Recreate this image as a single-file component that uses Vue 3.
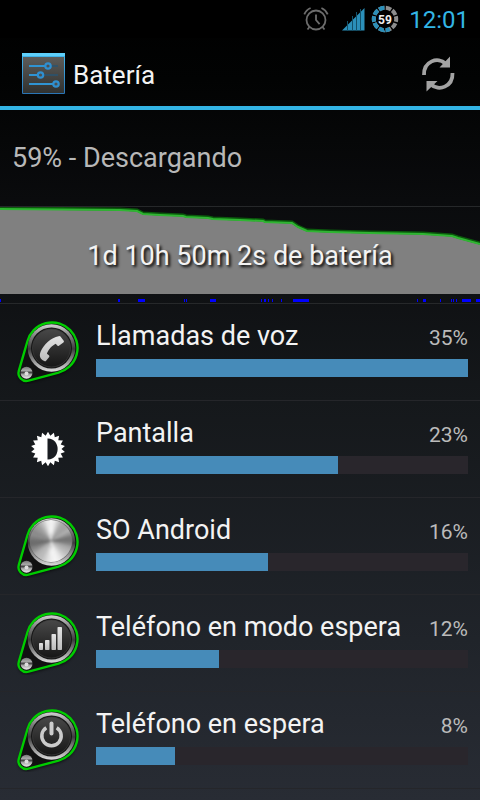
<script setup>
const apps = [
  { name: 'Llamadas de voz', share: 35, fill: 100, icon: 'phone' },
  { name: 'Pantalla', share: 23, fill: 65, icon: 'display' },
  { name: 'SO Android', share: 16, fill: 46.2, icon: 'metal' },
  { name: 'Teléfono en modo espera', share: 12, fill: 33, icon: 'signal' },
  { name: 'Teléfono en espera', share: 8, fill: 21.3, icon: 'power' },
]

// [start, width] of each awake period on the 480-unit time axis
const awake = [
  [0, 1], [118, 2], [138, 7], [184, 1], [186, 1], [210, 6], [261, 1], [264, 2],
  [268, 1], [272, 1], [281, 1], [293, 16], [417, 1], [423, 3], [440, 1],
  [451, 1], [453, 1], [456, 1], [462, 9], [476, 4],
]

const level = '0,1 120,2 137,3 143,6 160,7 183,8 186,9 208,10 213,11 240,12 263,13 265,14 292,15 298,19 307,23 330,24 370,25 423,26 452,28 458,30 480,36'

// teeth of the brightness symbol
const sun = Array.from({ length: 36 }, (_, i) => {
  const r = i % 2 ? 13.5 : 17.2
  const a = (i * Math.PI) / 18 - Math.PI / 2
  return `${(32 + r * Math.cos(a)).toFixed(1)},${(32 + r * Math.sin(a)).toFixed(1)}`
}).join(' ')

// brushed metal sheen: grey level for each 10 degree wedge, from the top
const sheen = [245, 235, 205, 175, 165, 165, 175, 150, 120, 115, 135, 165, 180, 190, 205, 225, 240, 245,
  240, 225, 205, 190, 185, 175, 150, 130, 110, 110, 125, 140, 140, 150, 160, 180, 205, 235]
const wedges = sheen.map((g, i) => {
  const p = (deg) => {
    const a = ((deg - 90) * Math.PI) / 180
    return `${(35 + 30 * Math.cos(a)).toFixed(1)} ${(27 + 30 * Math.sin(a)).toFixed(1)}`
  }
  return { d: `M35 27L${p(i * 10 - 6)}L${p(i * 10 + 6)}Z`, fill: `rgb(${g},${g},${g})` }
})
</script>

<template>
  <div class="screen">
    <svg class="defs" aria-hidden="true">
      <defs>
        <linearGradient id="ring" x1="0" y1="0" x2="0" y2="1">
          <stop offset="0" stop-color="#d2d2d2" />
          <stop offset=".25" stop-color="#808080" />
          <stop offset=".52" stop-color="#3c3c3c" />
          <stop offset=".75" stop-color="#8c8c8c" />
          <stop offset="1" stop-color="#dcdcdc" />
        </linearGradient>
        <linearGradient id="face" x1="0" y1="0" x2="0" y2="1">
          <stop offset="0" stop-color="#484848" />
          <stop offset="1" stop-color="#161616" />
        </linearGradient>
        <linearGradient id="glyph" x1="0" y1="0" x2="0" y2="1">
          <stop offset="0" stop-color="#e4e4e4" />
          <stop offset="1" stop-color="#bcbcbc" />
        </linearGradient>
        <linearGradient id="ball" x1="0" y1="0" x2="0" y2="1">
          <stop offset="0" stop-color="#777" />
          <stop offset=".3" stop-color="#aaa" />
          <stop offset=".48" stop-color="#444" />
          <stop offset=".65" stop-color="#aaa" />
          <stop offset="1" stop-color="#f0f0f0" />
        </linearGradient>
        <linearGradient id="tile" x1="0" y1="0" x2="0" y2="1">
          <stop offset="0" stop-color="#5c5c5a" />
          <stop offset="1" stop-color="#30312f" />
        </linearGradient>
        <linearGradient id="tileEdge" x1="0" y1="0" x2="0" y2="1">
          <stop offset="0" stop-color="#43b9ee" />
          <stop offset="1" stop-color="#2a74b4" />
        </linearGradient>
        <clipPath id="disc"><circle cx="35" cy="27" r="21" /></clipPath>
        <filter id="soft"><feGaussianBlur stdDeviation="0.8" /></filter>
        <filter id="shade" x="-20%" y="-20%" width="140%" height="140%"><feGaussianBlur stdDeviation="1.8" /></filter>
      </defs>
    </svg>

    <div class="status">
      <svg width="26" height="26" viewBox="0 0 26 26" fill="none" stroke="#6c6c6c" stroke-width="1.8">
        <circle cx="13" cy="14" r="9.5" />
        <path d="M13 8.500V14l3.600 4.200M1.300 8.300Q3 4 7.600 2M24.700 8.300Q23 4 18.400 2M6.500 21l-2 2.500M19.500 21l2 2.500" />
      </svg>
      <svg class="bars" width="24" height="24" viewBox="0 0 24 24">
        <path d="M1 23.500L23.500 1v22.500Z" fill="#2b8fb9" />
        <path d="M6.500 14v10M11.500 9v15M15.500 5v19M19.500 2v22" stroke="#125069" stroke-width="1" />
      </svg>
      <svg class="ring" width="28" height="28" viewBox="0 0 28 28">
        <g fill="none" stroke-width="4" transform="rotate(-86 14 14)">
          <circle cx="14" cy="14" r="11.200" stroke="#8d8d8d" pathLength="100" stroke-dasharray="8 2" />
          <circle cx="14" cy="14" r="11.200" stroke="#2b8fb9" pathLength="100" stroke-dasharray="0 42 6 2 8 2 8 2 8 2 8 2 8 2" />
        </g>
        <text x="14" y="18.500" text-anchor="middle">59</text>
      </svg>
      <time class="clock">12:01</time>
    </div>

    <header class="bar">
      <svg width="44" height="44" viewBox="0 0 44 44">
        <rect x="1" y="1" width="43" height="41" rx="1" fill="url(#tileEdge)" />
        <rect x="1" y="1" width="43" height="3" fill="#5fd0fb" />
        <rect x="2" y="5" width="41" height="36" fill="url(#tile)" />
        <path d="M30 14h7M22 23h15" stroke="#285471" stroke-width="1.4" />
        <path d="M8 14h16M8 23h9M8 32h25" stroke="#2f94d3" stroke-width="1.8" />
        <g fill="#4b5052" stroke="#2f8fd0" stroke-width="2.2">
          <circle cx="27" cy="14" r="2.7" /><circle cx="19.500" cy="23" r="2.700" /><circle cx="35" cy="32" r="2.700" />
        </g>
      </svg>
      <h1>Batería</h1>
      <button class="refresh" type="button" aria-label="Actualizar">
        <svg width="36" height="38" viewBox="0 0 36 38">
          <g fill="none" stroke="#a3a3a3" stroke-width="3.8">
            <path d="M4 20C3.500 6 18 1.500 25.500 8.500" />
            <path d="M32.500 18C33 32 18.500 36.500 11 29.500" />
          </g>
          <path d="M30 1.500V12.500H19.500ZM6.500 36.500V26H17.500Z" fill="#a3a3a3" />
        </svg>
      </button>
    </header>

    <main>
      <p class="summary">59% - Descargando</p>

      <section class="history">
        <svg class="graph" viewBox="0 0 480 87" preserveAspectRatio="none">
          <polygon :points="`0,87 ${level} 480,87`" fill="#808080" />
          <polyline :points="level" fill="none" stroke="#0a5a0c" stroke-width="3" />
          <polyline :points="level" fill="none" stroke="#2fb532" stroke-width="2" transform="translate(0 1)" />
        </svg>
        <p class="duration">1d 10h 50m 2s de batería</p>
        <svg class="awake" viewBox="0 0 480 3" preserveAspectRatio="none">
          <rect v-for="[x, w] in awake" :key="x" :x="x" y="0" :width="w" height="3" fill="#00f" />
        </svg>
      </section>

      <ul class="apps">
        <li v-for="app in apps" :key="app.name">
          <svg class="icon" width="64" height="64" viewBox="0 0 64 64" aria-hidden="true">
            <polygon v-if="app.icon === 'display'" :points="sun" fill="#fff" />
            <path v-if="app.icon === 'display'" d="M31.500 21.500C45 21 45 43 31.500 42.500Z" fill="#191c21" />
            <template v-else>
              <path d="M11.500 21A25.500 25.500 0 1 1 42.600 52.600L12.600 60.700A8 8 0 0 1 2.800 50.800Z" fill="#000" opacity=".7" filter="url(#shade)" transform="translate(0 2)" />
              <path d="M11.500 21A25.500 25.500 0 1 1 42.600 52.600L12.600 60.700A8 8 0 0 1 2.800 50.800Z" fill="#111" stroke="#0c0" stroke-width="2.4" stroke-linejoin="round" />
              <circle cx="35.500" cy="28" r="23.800" fill="url(#ring)" />
              <g v-if="app.icon === 'metal'">
                <circle cx="35" cy="27" r="21.500" fill="#666" />
                <g clip-path="url(#disc)">
                  <g filter="url(#soft)">
                    <path v-for="w in wedges" :key="w.d" :d="w.d" :fill="w.fill" />
                  </g>
                </g>
              </g>
              <template v-else>
                <circle cx="35.500" cy="28" r="20.500" fill="#151515" />
                <circle cx="35.500" cy="28" r="19" fill="url(#face)" stroke="#3e3e3e" stroke-width=".7" />
              </template>
              <circle cx="10.500" cy="52.800" r="6" fill="url(#ball)" />
              <circle cx="10.500" cy="53.500" r="2" fill="#ddd" />

              <path v-if="app.icon === 'phone'" d="M42.600 16.200q1-.7 1.900.3l3.200 4.200q.7 1-.3 1.800l-4.500 3.200q-.9.500-1.700-.2l-1.400-1.700c-3.600 1.600-7.600 6-8.900 10l2 1.400q.9.700.3 1.700l-3.100 3.900q-.8.900-1.800.3c-4.600-2.400-5.300-5.300-3.600-9.600 2.800-6.700 10.500-14.200 17.900-15.300Z" fill="url(#glyph)" />
              <g v-if="app.icon === 'signal'" fill="url(#glyph)">
                <rect x="23" y="32" width="4" height="7" rx=".8" />
                <rect x="29" y="29" width="4.500" height="10" rx=".8" />
                <rect x="35.500" y="23" width="4.500" height="16" rx=".8" />
                <rect x="41.500" y="16" width="4.500" height="23" rx=".8" />
              </g>
              <g v-if="app.icon === 'power'" fill="none" stroke="#ccc" stroke-width="3.500">
                <path d="M30.300 19.800A9.700 9.700 0 1 0 40.700 19.800" />
                <path d="M35.500 15.500V25.500" stroke-width="4" stroke-linecap="round" />
              </g>
            </template>
          </svg>
          <div class="usage">
            <div class="line">
              <span class="name">{{ app.name }}</span>
              <span class="share">{{ app.share }}%</span>
            </div>
            <div class="track" role="progressbar" :aria-label="app.name" :aria-valuenow="app.share">
              <div class="fill" :style="{ width: app.fill + '%' }"></div>
            </div>
          </div>
        </li>
      </ul>
    </main>
  </div>
</template>

<style>
body {
  margin: 0;
  background: #272b32;
}
</style>

<style scoped>
.screen {
  box-sizing: border-box;
  min-height: 100vh;
  overflow: hidden;
  background: linear-gradient(#000 0, #020303 10%, #0a0b0d 25%, #15181b 50%, #20242a 80%, #282c34 100%);
  color: #f3f3f3;
  font-family: Roboto, "Noto Sans", sans-serif;
}

.defs {
  position: absolute;
  width: 0;
  height: 0;
}

.status {
  display: flex;
  align-items: center;
  justify-content: flex-end;
  height: 38px;
  padding-right: 11px;
  background: #000;
}

.bars {
  margin-left: 12px;
}

.ring {
  margin: 0 10px 0 6px;
}

.ring text {
  fill: #eee;
  font-size: 12px;
  font-weight: 700;
}

.clock {
  padding-top: 2px;
  color: #33b5e5;
  font-size: 24px;
  line-height: 38px;
}

.bar {
  display: flex;
  align-items: center;
  gap: 8px;
  box-sizing: border-box;
  height: 72px;
  padding: 4px 24px 0 21px;
  border-bottom: 4px solid #33b5e5;
}

.bar h1 {
  flex: 1;
  margin: 0;
  padding-top: 2px;
  font-size: 26px;
  font-weight: 400;
  line-height: 32px;
}

.refresh {
  display: flex;
  padding: 0;
  border: 0;
  background: none;
}

.summary {
  margin: 0;
  padding: 32px 12px;
  border-bottom: 1px solid #26282a;
  color: #b8b8b8;
  font-size: 27px;
  line-height: 32px;
}

.history {
  display: grid;
  grid-template-rows: 87px 3px;
  row-gap: 5px;
  padding-bottom: 1px;
  border-bottom: 1px solid #26282a;
}

.graph {
  grid-area: 1 / 1;
  width: 100%;
  height: 87px;
}

.duration {
  grid-area: 1 / 1;
  margin: 0;
  padding-top: 33px;
  font-size: 27px;
  line-height: 32px;
  text-align: center;
  text-shadow: 2px 2px 3px #000;
}

.awake {
  grid-area: 2 / 1;
  width: 100%;
  height: 3px;
}

.apps {
  margin: 0;
  padding: 0;
  list-style: none;
}

.apps li {
  display: flex;
  align-items: center;
  gap: 16px;
  box-sizing: border-box;
  height: 97px;
  padding: 0 12px 0 16px;
  border-bottom: 1px solid #25262a;
}

.icon {
  flex: none;
}

.usage {
  flex: 1;
  min-width: 0;
}

.line {
  display: flex;
  align-items: baseline;
  justify-content: space-between;
  margin-bottom: 5px;
  line-height: 32px;
}

.name {
  font-size: 27px;
}

.share {
  color: #bbb;
  font-size: 21px;
}

.track {
  height: 18px;
  margin-bottom: 8px;
  background: #29262c;
}

.fill {
  height: 100%;
  background: #468bb9;
}
</style>
